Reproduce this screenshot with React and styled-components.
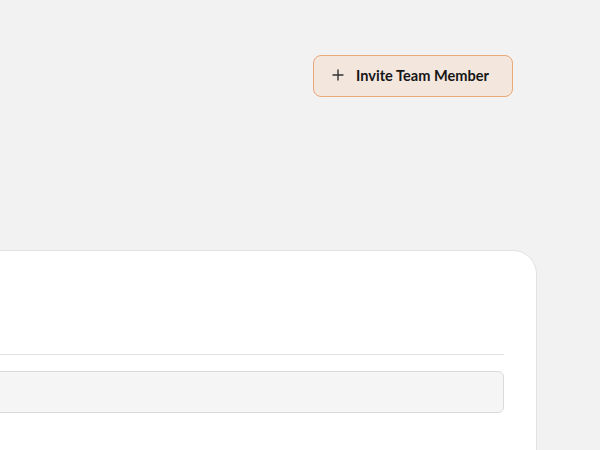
import React from "react";
import styled, { createGlobalStyle } from "styled-components";

const Global = createGlobalStyle`
  html, body { margin: 0; padding: 0; background: #f2f2f2; }
  body { font-family: "Lato", "Liberation Sans", sans-serif; overflow: hidden; }
  * { box-sizing: border-box; }
`;

const Page = styled.div`
  width: 600px;
  height: 450px;
  overflow: hidden;
  padding-top: 55px;
  display: flex;
  flex-direction: column;
`;

const Header = styled.div`
  display: flex;
  justify-content: flex-end;
  padding-right: 87px;
`;

const InviteButton = styled.button`
  display: flex;
  align-items: center;
  gap: 11px;
  width: 200px;
  height: 42px;
  padding: 0 17px 2px 17px;
  background: #f3e6dd;
  border: 1px solid #e9a978;
  border-radius: 8px;
  font-family: "Lato", "Liberation Sans", sans-serif;
  font-weight: 700;
  font-size: 14.6px;
  white-space: nowrap;
  color: #161616;
  cursor: pointer;
`;

const Card = styled.div`
  margin-top: 153px;
  margin-left: -40px;
  width: 577px;
  height: 260px;
  flex-shrink: 0;
  background: #ffffff;
  border: 1px solid #e2e2e2;
  border-radius: 24px;
  padding: 0 32px 0 0;
  display: flex;
  flex-direction: column;
`;

const CardHead = styled.div`
  height: 104px;
  flex-shrink: 0;
  border-bottom: 1px solid #e2e2e2;
`;

const SearchBox = styled.div`
  margin-top: 16px;
  height: 42px;
  flex-shrink: 0;
  background: #f5f5f5;
  border: 1px solid #dadada;
  border-radius: 6px;
`;

const Plus = () => (
  <svg width="14" height="14" viewBox="0 0 14 14" fill="none" stroke="#333" strokeWidth="1.4" strokeLinecap="round">
    <path d="M7 2v10M2 7h10" />
  </svg>
);

export default function App() {
  return (
    <>
      <Global />
      <Page>
        <Header>
          <InviteButton>
            <Plus />
            Invite Team Member
          </InviteButton>
        </Header>
        <Card>
          <CardHead />
          <SearchBox />
        </Card>
      </Page>
    </>
  );
}
